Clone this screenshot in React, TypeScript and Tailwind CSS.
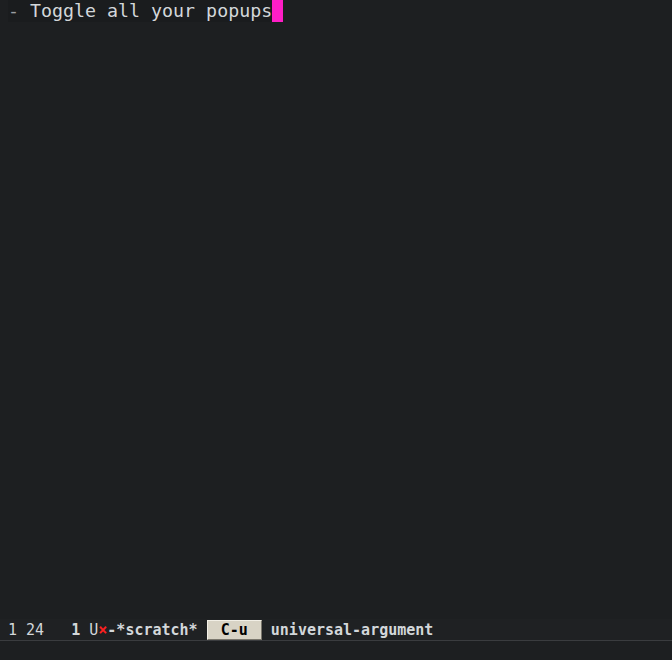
const mono = "font-['DejaVu_Sans_Mono','Liberation_Mono',monospace]";

export default function App() {
  return (
    <div className={`flex h-[660px] w-[672px] flex-col overflow-hidden bg-[#1d1f21] text-[#d3d7da] ${mono}`}>
      {/* buffer */}
      <div className="flex-1">
        <div className="flex h-[22px] items-center pl-2">
          <span className="whitespace-pre bg-[#1a1c1e] text-[18.3px] leading-[22px]">
            <span className="text-[#9a9ea2]">-</span> Toggle all your popups
          </span>
          <span className="h-[22px] w-[11px] bg-[#ff1ec6]" />
        </div>
      </div>

      {/* mode line */}
      <div className="flex h-[22px] items-center whitespace-pre border-b border-[#3a3c3f] bg-[#1f2123] pl-2 text-[15px] leading-[20px]">
        <span>1 24   </span>
        <span className="font-bold">1</span>
        <span> U</span>
        <span className="font-bold text-[#ff2020]">×</span>
        <span className="font-bold">-*scratch* </span>
        <span className="inline-block h-[20px] border border-t-[#f2efe6] border-l-[#f2efe6] border-b-[#7a766c] border-r-[#7a766c] bg-[#d8d3c5] px-[13px] font-bold leading-[18px] text-black">
          C-u
        </span>
        <span className="font-bold"> universal-argument</span>
      </div>

      {/* echo area */}
      <div className="h-[19px]" />
    </div>
  );
}
